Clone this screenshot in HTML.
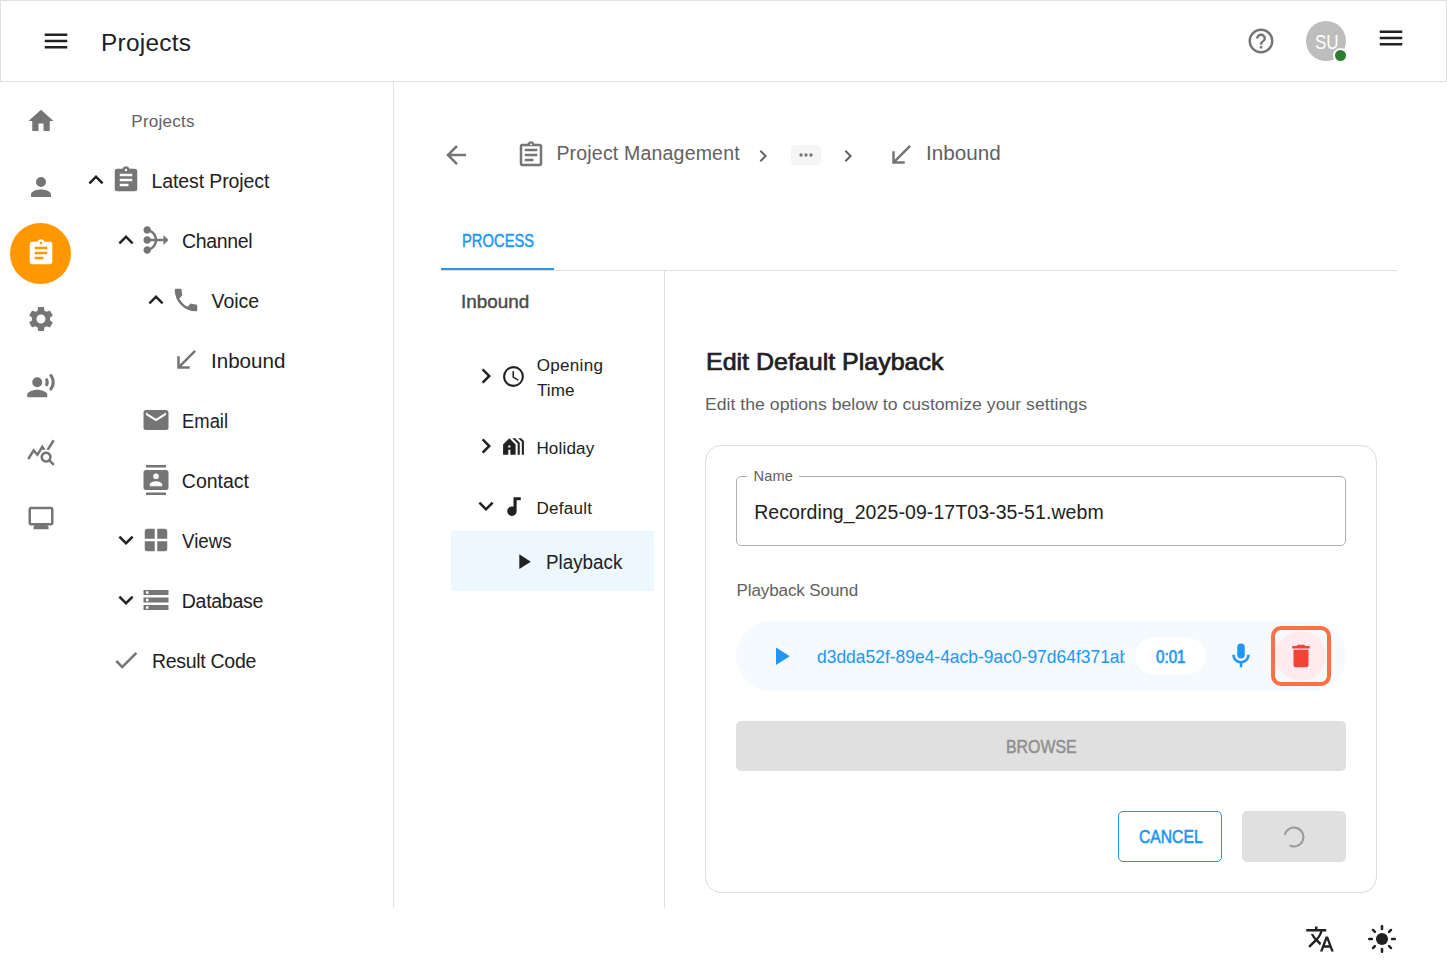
<!DOCTYPE html>
<html lang="en"><head><meta charset="utf-8"><title>Projects</title>
<style>
html,body{margin:0;padding:0;background:#fff;}
body{width:1447px;height:970px;position:relative;overflow:hidden;font-family:"Liberation Sans",sans-serif;}
.i{position:absolute;display:block;}
.t{position:absolute;line-height:1;white-space:nowrap;}
.b{position:absolute;box-sizing:border-box;}
</style></head><body>
<div class="b" style="left:0px;top:0px;width:1447px;height:82px;border:1px solid #e0e0e0;background:#fff;"></div>
<svg class="i" style="left:41px;top:26px;width:30px;height:30px;fill:#212121;" viewBox="0 0 24 24"><path d="M3,6H21V8H3V6M3,11H21V13H3V11M3,16H21V18H3V16Z"/></svg>
<div class="t" style="left:101.00px;top:31.00px;font-size:24.4px;color:#212121;letter-spacing:0.270px;">Projects</div>
<svg class="i" style="left:1246px;top:26px;width:30px;height:30px;fill:#757575;" viewBox="0 0 24 24"><path d="M11,18H13V16H11V18M12,2A10,10 0 0,0 2,12A10,10 0 0,0 12,22A10,10 0 0,0 22,12A10,10 0 0,0 12,2M12,20C7.59,20 4,16.41 4,12C4,7.59 7.59,4 12,4C16.41,4 20,7.59 20,12C20,16.41 16.41,20 12,20M12,6A4,4 0 0,0 8,10H10A2,2 0 0,1 12,8A2,2 0 0,1 14,10C14,12 11,11.75 11,15H13C13,12.75 16,12.5 16,10A4,4 0 0,0 12,6Z"/></svg>
<div class="b" style="left:1306px;top:21px;width:40px;height:40px;border-radius:50%;background:#bdbdbd;"></div>
<div class="t" style="left:1314.70px;top:33.00px;font-size:19.5px;color:#fff;transform:scaleX(0.8729);transform-origin:0 0;">SU</div>
<div class="b" style="left:1333px;top:47.7px;width:15px;height:15px;border-radius:50%;background:#2e7d32;border:2px solid #fff;"></div>
<svg class="i" style="left:1376px;top:23px;width:30px;height:30px;fill:#212121;" viewBox="0 0 24 24"><path d="M3,6H21V8H3V6M3,11H21V13H3V11M3,16H21V18H3V16Z"/></svg>
<svg class="i" style="left:26px;top:106px;width:30px;height:30px;fill:#757575;" viewBox="0 0 24 24"><path d="M10,20V14H14V20H19V12H22L12,3L2,12H5V20H10Z"/></svg>
<svg class="i" style="left:26px;top:172px;width:30px;height:30px;fill:#757575;" viewBox="0 0 24 24"><path d="M12,4A4,4 0 0,1 16,8A4,4 0 0,1 12,12A4,4 0 0,1 8,8A4,4 0 0,1 12,4M12,14C16.42,14 20,15.79 20,18V20H4V18C4,15.79 7.58,14 12,14Z"/></svg>
<div class="b" style="left:10px;top:223px;width:61px;height:61px;border-radius:50%;background:#ff9800;"></div>
<svg class="i" style="left:26px;top:238px;width:30px;height:30px;fill:#fff;" viewBox="0 0 24 24"><path d="M17,9H7V7H17M17,13H7V11H17M14,17H7V15H14M12,3A1,1 0 0,1 13,4A1,1 0 0,1 12,5A1,1 0 0,1 11,4A1,1 0 0,1 12,3M19,3H14.82C14.4,1.84 13.3,1 12,1C10.7,1 9.6,1.84 9.18,3H5A2,2 0 0,0 3,5V19A2,2 0 0,0 5,21H19A2,2 0 0,0 21,19V5A2,2 0 0,0 19,3Z"/></svg>
<svg class="i" style="left:26px;top:304px;width:30px;height:30px;fill:#757575;" viewBox="0 0 24 24"><path d="M19.14,12.94c0.04-0.3,0.06-0.61,0.06-0.94c0-0.32-0.02-0.64-0.07-0.94l2.03-1.58c0.18-0.14,0.23-0.41,0.12-0.61l-1.92-3.32c-0.12-0.22-0.37-0.29-0.59-0.22l-2.39,0.96c-0.5-0.38-1.03-0.7-1.62-0.94L14.4,2.81c-0.04-0.24-0.24-0.41-0.48-0.41h-3.84c-0.24,0-0.43,0.17-0.47,0.41L9.25,5.35C8.66,5.59,8.12,5.92,7.63,6.29L5.24,5.33c-0.22-0.08-0.47,0-0.59,0.22L2.74,8.87C2.62,9.08,2.66,9.34,2.86,9.48l2.03,1.58C4.84,11.36,4.8,11.69,4.8,12s0.02,0.64,0.07,0.94l-2.03,1.58c-0.18,0.14-0.23,0.41-0.12,0.61l1.92,3.32c0.12,0.22,0.37,0.29,0.59,0.22l2.39-0.96c0.5,0.38,1.03,0.7,1.62,0.94l0.36,2.54c0.05,0.24,0.24,0.41,0.48,0.41h3.84c0.24,0,0.44-0.17,0.47-0.41l0.36-2.54c0.59-0.24,1.13-0.56,1.62-0.94l2.39,0.96c0.22,0.08,0.47,0,0.59-0.22l1.92-3.32c0.12-0.22,0.07-0.47-0.12-0.61L19.14,12.94z M12,15.6c-1.98,0-3.6-1.62-3.6-3.6s1.62-3.6,3.6-3.6s3.6,1.62,3.6,3.6S13.98,15.6,12,15.6z"/></svg>
<svg class="i" style="left:26px;top:371px;width:30px;height:30px;fill:#757575;" viewBox="0 0 24 24"><path d="M9,5A4,4 0 0,1 13,9A4,4 0 0,1 9,13A4,4 0 0,1 5,9A4,4 0 0,1 9,5M9,15C11.67,15 17,16.34 17,19V21H1V19C1,16.34 6.33,15 9,15M16.76,5.36C18.78,7.56 18.78,10.61 16.76,12.63L15.08,10.94C15.92,9.76 15.92,8.23 15.08,7.05L16.76,5.36M20.07,2C24,6.05 23.97,12.11 20.07,16L18.44,14.37C21.21,11.19 21.21,6.65 18.44,3.63L20.07,2Z"/></svg>
<svg class="i" style="left:26px;top:437px;width:30px;height:30px;fill:#757575;" viewBox="0 0 24 24"><path d="M19.88,18.47c0.44-0.7,0.7-1.51,0.7-2.39c0-2.49-2.01-4.5-4.5-4.5s-4.5,2.01-4.5,4.5s2.01,4.5,4.49,4.5c0.88,0,1.7-0.26,2.39-0.7L21.58,23L23,21.58L19.88,18.47z M16.08,18.58c-1.38,0-2.5-1.12-2.5-2.5c0-1.38,1.12-2.5,2.5-2.5s2.5,1.12,2.5,2.5C18.58,17.46,17.46,18.58,16.08,18.58z M15.72,10.08c-0.74,0.02-1.45,0.18-2.1,0.45l-0.55-0.83l-3.8,6.18l-3.01-3.52l-3.63,5.81L1,17l5-8l3,3.5L13,6C13,6,15.72,10.08,15.72,10.08z M18.31,10.58c-0.64-0.28-1.33-0.45-2.05-0.49c0,0,5.12-8.09,5.12-8.09L23,3.18L18.31,10.58z"/></svg>
<svg class="i" style="left:26px;top:503px;width:30px;height:30px;fill:#757575;" viewBox="0 0 24 24"><path d="M20 3H4c-1.1 0-2 .9-2 2v11c0 1.1.9 2 2 2h3l-1 1v2h12v-2l-1-1h3c1.1 0 2-.9 2-2V5c0-1.1-.9-2-2-2zm0 13H4V5h16v11z"/></svg>
<div class="b" style="left:393px;top:82px;width:1px;height:826px;background:#e0e0e0;"></div>
<div class="t" style="left:131.30px;top:113.00px;font-size:17.06px;color:#616161;letter-spacing:0.221px;">Projects</div>
<svg class="i" style="left:81px;top:165px;width:30px;height:30px;fill:#212121;" viewBox="0 0 24 24"><path d="M7.41,15.41L12,10.83L16.59,15.41L18,14L12,8L6,14L7.41,15.41Z"/></svg>
<svg class="i" style="left:111px;top:165px;width:30px;height:30px;fill:#757575;" viewBox="0 0 24 24"><path d="M17,9H7V7H17M17,13H7V11H17M14,17H7V15H14M12,3A1,1 0 0,1 13,4A1,1 0 0,1 12,5A1,1 0 0,1 11,4A1,1 0 0,1 12,3M19,3H14.82C14.4,1.84 13.3,1 12,1C10.7,1 9.6,1.84 9.18,3H5A2,2 0 0,0 3,5V19A2,2 0 0,0 5,21H19A2,2 0 0,0 21,19V5A2,2 0 0,0 19,3Z"/></svg>
<div class="t" style="left:151.40px;top:172.00px;font-size:19.5px;color:#212121;letter-spacing:-0.093px;">Latest Project</div>
<svg class="i" style="left:111px;top:225px;width:30px;height:30px;fill:#212121;" viewBox="0 0 24 24"><path d="M7.41,15.41L12,10.83L16.59,15.41L18,14L12,8L6,14L7.41,15.41Z"/></svg>
<svg class="i" style="left:141px;top:225px;width:30px;height:30px;fill:#757575;" viewBox="0 0 24 24"><path d="M18,16l4-4l-4-4v3h-5.06c-0.34-3.1-2.26-5.72-4.94-7.05C7.96,2.31,6.64,1,5,1C3.34,1,2,2.34,2,4s1.34,3,3,3c0.95,0,1.78-0.45,2.33-1.14C9.23,6.9,10.6,8.77,10.92,11h-3.1C7.4,9.84,6.3,9,5,9c-1.66,0-3,1.34-3,3s1.34,3,3,3c1.3,0,2.4-0.84,2.82-2h3.1c-0.32,2.23-1.69,4.1-3.58,5.14C6.78,17.45,5.95,17,5,17c-1.66,0-3,1.34-3,3s1.34,3,3,3c1.64,0,2.96-1.31,2.99-2.95c2.68-1.33,4.6-3.95,4.94-7.05H18V16z"/></svg>
<div class="t" style="left:182.00px;top:232.00px;font-size:19.5px;color:#212121;letter-spacing:-0.335px;">Channel</div>
<svg class="i" style="left:141px;top:285px;width:30px;height:30px;fill:#212121;" viewBox="0 0 24 24"><path d="M7.41,15.41L12,10.83L16.59,15.41L18,14L12,8L6,14L7.41,15.41Z"/></svg>
<svg class="i" style="left:171px;top:285px;width:30px;height:30px;fill:#757575;" viewBox="0 0 24 24"><path d="M6.62,10.79C8.06,13.62 10.38,15.94 13.21,17.38L15.41,15.18C15.69,14.9 16.08,14.82 16.43,14.93C17.55,15.3 18.75,15.5 20,15.5A1,1 0 0,1 21,16.5V20A1,1 0 0,1 20,21A17,17 0 0,1 3,4A1,1 0 0,1 4,3H7.5A1,1 0 0,1 8.5,4C8.5,5.25 8.7,6.45 9.07,7.57C9.18,7.92 9.1,8.31 8.82,8.59L6.62,10.79Z"/></svg>
<div class="t" style="left:211.50px;top:292.00px;font-size:19.5px;color:#212121;letter-spacing:-0.039px;">Voice</div>
<svg class="i" style="left:171px;top:345px;width:30px;height:30px;fill:#757575;" viewBox="0 0 24 24"><path d="M15,19v-2H8.41L20,5.41L18.59,4L7,15.59V9H5v10H15z"/></svg>
<div class="t" style="left:211.45px;top:352.00px;font-size:19.5px;color:#212121;transform:scaleX(1.0547);transform-origin:0 0;">Inbound</div>
<svg class="i" style="left:141px;top:405px;width:30px;height:30px;fill:#757575;" viewBox="0 0 24 24"><path d="M20,8L12,13L4,8V6L12,11L20,6M20,4H4C2.89,4 2,4.89 2,6V18A2,2 0 0,0 4,20H20A2,2 0 0,0 22,18V6C22,4.89 21.1,4 20,4Z"/></svg>
<div class="t" style="left:181.56px;top:412.00px;font-size:19.5px;color:#212121;transform:scaleX(0.9446);transform-origin:0 0;">Email</div>
<svg class="i" style="left:141px;top:465px;width:30px;height:30px;fill:#757575;" viewBox="0 0 24 24"><path d="M20,0H4V2H20V0M4,24H20V22H4V24M20,4H4A2,2 0 0,0 2,6V18A2,2 0 0,0 4,20H20A2,2 0 0,0 22,18V6A2,2 0 0,0 20,4M12,6.75A2.25,2.25 0 0,1 14.25,9A2.25,2.25 0 0,1 12,11.25A2.25,2.25 0 0,1 9.75,9A2.25,2.25 0 0,1 12,6.75M17,17H7V15.5C7,13.83 10.33,13 12,13C13.67,13 17,13.83 17,15.5V17Z"/></svg>
<div class="t" style="left:181.80px;top:472.00px;font-size:19.5px;color:#212121;">Contact</div>
<svg class="i" style="left:111px;top:525px;width:30px;height:30px;fill:#212121;" viewBox="0 0 24 24"><path d="M7.41,8.58L12,13.17L16.59,8.58L18,10L12,16L6,10L7.41,8.58Z"/></svg>
<svg class="i" style="left:141px;top:525px;width:30px;height:30px;fill:#757575;" viewBox="0 0 24 24"><path d="M3,5A2,2 0 0,1 5,3H11V11H3ZM13,3H19A2,2 0 0,1 21,5V11H13ZM3,13H11V21H5A2,2 0 0,1 3,19ZM13,13H21V19A2,2 0 0,1 19,21H13Z"/></svg>
<div class="t" style="left:181.50px;top:532.00px;font-size:19.5px;color:#212121;transform:scaleX(0.9593);transform-origin:0 0;">Views</div>
<svg class="i" style="left:111px;top:585px;width:30px;height:30px;fill:#212121;" viewBox="0 0 24 24"><path d="M7.41,8.58L12,13.17L16.59,8.58L18,10L12,16L6,10L7.41,8.58Z"/></svg>
<svg class="i" style="left:141px;top:585px;width:30px;height:30px;fill:#757575;" viewBox="0 0 24 24"><path d="M2,20h20v-4H2V20z M4,17h2v2H4V17z M2,4v4h20V4H2z M6,7H4V5h2V7z M2,14h20v-4H2V14z M4,11h2v2H4V11z"/></svg>
<div class="t" style="left:181.80px;top:592.00px;font-size:19.5px;color:#212121;letter-spacing:-0.290px;">Database</div>
<svg class="i" style="left:111px;top:645px;width:30px;height:30px;fill:#757575;" viewBox="0 0 24 24"><path d="M21,7L9,19L3.5,13.5L4.91,12.09L9,16.17L19.59,5.59L21,7Z"/></svg>
<div class="t" style="left:151.90px;top:652.00px;font-size:19.5px;color:#212121;letter-spacing:-0.286px;">Result Code</div>
<svg class="i" style="left:441px;top:140px;width:30px;height:30px;fill:#757575;" viewBox="0 0 24 24"><path d="M20,11V13H8L13.5,18.5L12.08,19.92L4.16,12L12.08,4.08L13.5,5.5L8,11H20Z"/></svg>
<svg class="i" style="left:516px;top:140px;width:30px;height:30px;fill:#757575;" viewBox="0 0 24 24"><path d="M7 15h7v2H7zm0-4h10v2H7zm0-4h10v2H7zm12-4h-4.18C14.4 1.84 13.3 1 12 1c-1.3 0-2.4.84-2.82 2H5c-.14 0-.27.01-.4.04-.39.08-.74.28-1.01.55-.18.18-.33.4-.43.64-.1.23-.16.49-.16.77v14c0 .27.06.54.16.78s.25.45.43.64c.27.27.62.47 1.01.55.13.02.26.03.4.03h14c1.1 0 2-.9 2-2V5c0-1.1-.9-2-2-2zm-7-.25c.41 0 .75.34.75.75s-.34.75-.75.75-.75-.34-.75-.75.34-.75.75-.75zM19 19H5V5h14v14z"/></svg>
<div class="t" style="left:556.40px;top:144.00px;font-size:19.5px;color:#616161;letter-spacing:0.194px;">Project Management</div>
<svg class="i" style="left:751px;top:143.5px;width:24px;height:24px;fill:#616161;" viewBox="0 0 24 24"><path d="M8.59,16.58L13.17,12L8.59,7.41L10,6L16,12L10,18L8.59,16.58Z"/></svg>
<div class="b" style="left:791px;top:145px;width:30px;height:20px;background:#f5f5f5;border-radius:4px;"></div>
<svg class="i" style="left:796px;top:145px;width:20px;height:20px;fill:#757575;" viewBox="0 0 24 24"><path d="M16,12A2,2 0 0,1 18,10A2,2 0 0,1 20,12A2,2 0 0,1 18,14A2,2 0 0,1 16,12M10,12A2,2 0 0,1 12,10A2,2 0 0,1 14,12A2,2 0 0,1 12,14A2,2 0 0,1 10,12M4,12A2,2 0 0,1 6,10A2,2 0 0,1 8,12A2,2 0 0,1 6,14A2,2 0 0,1 4,12Z"/></svg>
<svg class="i" style="left:836px;top:143.5px;width:24px;height:24px;fill:#616161;" viewBox="0 0 24 24"><path d="M8.59,16.58L13.17,12L8.59,7.41L10,6L16,12L10,18L8.59,16.58Z"/></svg>
<svg class="i" style="left:885.75px;top:140.2px;width:30px;height:30px;fill:#757575;" viewBox="0 0 24 24"><path d="M15,19v-2H8.41L20,5.41L18.59,4L7,15.59V9H5v10H15z"/></svg>
<div class="t" style="left:925.54px;top:144.00px;font-size:19.5px;color:#616161;transform:scaleX(1.0591);transform-origin:0 0;">Inbound</div>
<div class="b" style="left:441px;top:270px;width:956px;height:1px;background:#e0e0e0;"></div>
<div class="b" style="left:441px;top:267.6px;width:112.8px;height:2.5px;background:#2196f3;"></div>
<div class="t" style="left:461.89px;top:232.00px;font-size:18.2px;color:#2196f3;transform:scaleX(0.8120);transform-origin:0 0;-webkit-text-stroke:0.5px #2196f3;">PROCESS</div>
<div class="b" style="left:664px;top:271px;width:1px;height:637px;background:#e0e0e0;"></div>
<div class="t" style="left:461.26px;top:293.00px;font-size:18.2px;color:#4a4a4a;transform:scaleX(1.0373);transform-origin:0 0;-webkit-text-stroke:0.4px #4a4a4a;">Inbound</div>
<svg class="i" style="left:471px;top:361px;width:30px;height:30px;fill:#212121;" viewBox="0 0 24 24"><path d="M8.59,16.58L13.17,12L8.59,7.41L10,6L16,12L10,18L8.59,16.58Z"/></svg>
<svg class="i" style="left:501.1px;top:364px;width:25px;height:25px;fill:#212121;" viewBox="0 0 24 24"><path d="M12,20A8,8 0 0,0 20,12A8,8 0 0,0 12,4A8,8 0 0,0 4,12A8,8 0 0,0 12,20M12,2A10,10 0 0,1 22,12A10,10 0 0,1 12,22C6.47,22 2,17.5 2,12A10,10 0 0,1 12,2M12.5,7V12.25L17,14.92L16.25,16.15L11,13V7H12.5Z"/></svg>
<div class="t" style="left:536.70px;top:357.00px;font-size:17.06px;color:#212121;letter-spacing:0.305px;">Opening</div>
<div class="t" style="left:537.00px;top:382.00px;font-size:17.06px;color:#212121;letter-spacing:0.044px;">Time</div>
<svg class="i" style="left:471px;top:431px;width:30px;height:30px;fill:#212121;" viewBox="0 0 24 24"><path d="M8.59,16.58L13.17,12L8.59,7.41L10,6L16,12L10,18L8.59,16.58Z"/></svg>
<svg class="i" style="left:501px;top:433.9px;width:25px;height:25px;fill:#212121;" viewBox="0 0 24 24"><path d="M18,20V8.35L13.65,4h-2.83L16,9.18V20H18z M22,20V6.69L19.31,4h-2.83L20,7.52V20H22z M8,4l-6,6v10h5v-5h2v5h5V10L8,4z M9,13H7v-2h2V13z"/></svg>
<div class="t" style="left:536.40px;top:440.00px;font-size:17.06px;color:#212121;letter-spacing:0.162px;">Holiday</div>
<svg class="i" style="left:471px;top:491px;width:30px;height:30px;fill:#212121;" viewBox="0 0 24 24"><path d="M7.41,8.58L12,13.17L16.59,8.58L18,10L12,16L6,10L7.41,8.58Z"/></svg>
<svg class="i" style="left:500.7px;top:494px;width:25px;height:25px;fill:#212121;" viewBox="0 0 24 24"><path d="M12,3V12.26C11.5,12.09 11,12 10.5,12C8,12 6,14 6,16.5C6,19 8,21 10.5,21C13,21 15,19 15,16.5V6H19V3H12Z"/></svg>
<div class="t" style="left:536.40px;top:500.00px;font-size:17.06px;color:#212121;letter-spacing:0.254px;">Default</div>
<div class="b" style="left:451px;top:531px;width:203px;height:60px;background:#edf7fe;"></div>
<svg class="i" style="left:510.9px;top:549px;width:25px;height:25px;fill:#212121;" viewBox="0 0 24 24"><path d="M8,5.14V19.14L19,12.14L8,5.14Z"/></svg>
<div class="t" style="left:546.34px;top:553.00px;font-size:19.5px;color:#212121;transform:scaleX(0.9646);transform-origin:0 0;">Playback</div>
<div class="t" style="left:706.48px;top:351.00px;font-size:23.4px;color:#212121;transform:scaleX(1.0680);transform-origin:0 0;-webkit-text-stroke:0.7px #212121;">Edit Default Playback</div>
<div class="t" style="left:705.46px;top:396.00px;font-size:17.06px;color:#616161;transform:scaleX(1.0363);transform-origin:0 0;">Edit the options below to customize your settings</div>
<div class="b" style="left:705px;top:445px;width:672px;height:447.5px;border:1px solid #dddddd;border-radius:16px;"></div>
<div class="b" style="left:736px;top:476px;width:610px;height:70px;border:1px solid #b0b0b0;border-radius:5px;"></div>
<div class="b" style="left:746.8px;top:475px;width:52.2px;height:3px;background:#fff;"></div>
<div class="t" style="left:753.50px;top:469.00px;font-size:14.6px;color:#616161;letter-spacing:0.163px;">Name</div>
<div class="t" style="left:754.20px;top:503.00px;font-size:19.5px;color:#212121;letter-spacing:0.078px;">Recording_2025-09-17T03-35-51.webm</div>
<div class="t" style="left:736.50px;top:582.00px;font-size:17.06px;color:#616161;letter-spacing:-0.117px;">Playback Sound</div>
<div class="b" style="left:736px;top:621px;width:610px;height:70px;background:#f4fafe;border-radius:35px;"></div>
<svg class="i" style="left:766px;top:640.8px;width:30px;height:30px;fill:#2196f3;" viewBox="0 0 24 24"><path d="M8,5.14V19.14L19,12.14L8,5.14Z"/></svg>
<div class="t" style="left:816.80px;top:648.00px;font-size:18.2px;color:#2196f3;width:321.088px;overflow:hidden;transform:scaleX(0.9589);transform-origin:0 0;">d3dda52f-89e4-4acb-9ac0-97d64f371ab2.webm</div>
<div class="b" style="left:1135px;top:638px;width:71px;height:36px;background:#fff;border-radius:18px;"></div>
<div class="t" style="left:1156.20px;top:648.00px;font-size:18.2px;color:#2196f3;transform:scaleX(0.8333);transform-origin:0 0;-webkit-text-stroke:0.7px #2196f3;">0:01</div>
<svg class="i" style="left:1225.9px;top:640.7px;width:30px;height:30px;fill:#2196f3;" viewBox="0 0 24 24"><path d="M12,2A3,3 0 0,1 15,5V11A3,3 0 0,1 12,14A3,3 0 0,1 9,11V5A3,3 0 0,1 12,2M19,11C19,14.53 16.39,17.44 13,17.93V21H11V17.93C7.61,17.44 5,14.53 5,11H7A5,5 0 0,0 12,16A5,5 0 0,0 17,11H19Z"/></svg>
<div class="b" style="left:1276.2px;top:630.8px;width:50px;height:50px;border-radius:50%;background:#ffebee;"></div>
<div class="b" style="left:1271px;top:626px;width:60px;height:60px;border:4px solid #ff7043;border-radius:10px;"></div>
<svg class="i" style="left:1286px;top:641px;width:30px;height:30px;fill:#f44336;" viewBox="0 0 24 24"><path d="M19,4H15.5L14.5,3H9.5L8.5,4H5V6H19M6,19A2,2 0 0,0 8,21H16A2,2 0 0,0 18,19V7H6V19Z"/></svg>
<div class="b" style="left:736px;top:721px;width:610px;height:50px;background:#e0e0e0;border-radius:5px;"></div>
<div class="t" style="left:1005.53px;top:738.00px;font-size:18.2px;color:#8f8f8f;transform:scaleX(0.8744);transform-origin:0 0;-webkit-text-stroke:0.5px #8f8f8f;">BROWSE</div>
<div class="b" style="left:1118px;top:811px;width:104px;height:50.6px;border:1px solid #2196f3;border-radius:5px;"></div>
<div class="t" style="left:1138.70px;top:828.00px;font-size:18.2px;color:#2196f3;transform:scaleX(0.8620);transform-origin:0 0;-webkit-text-stroke:0.6px #2196f3;">CANCEL</div>
<div class="b" style="left:1242px;top:811px;width:104px;height:50.6px;background:#e0e0e0;border-radius:5px;"></div>
<svg class="i" style="left:1281px;top:824.1px;width:26px;height:26px;" viewBox="0 0 26 26"><path d="M3.79 10.87 A9.45 9.45 0 1 1 8.71 21.42" fill="none" stroke="#999" stroke-width="2"/></svg>
<svg class="i" style="left:1305px;top:924px;width:30px;height:30px;fill:#212121;" viewBox="0 0 24 24"><path d="M12.87,15.07L10.33,12.56L10.36,12.53C12.1,10.59 13.34,8.36 14.07,6H17V4H10V2H8V4H1V6H12.17C11.5,7.92 10.44,9.75 9,11.35C8.07,10.32 7.3,9.19 6.69,8H4.69C5.42,9.63 6.42,11.17 7.67,12.56L2.58,17.58L4,19L9,14L12.11,17.11L12.87,15.07M18.5,10H16.5L12,22H14L15.12,19H19.87L21,22H23L18.5,10M15.88,17L17.5,12.67L19.12,17H15.88Z"/></svg>
<svg class="i" style="left:1367px;top:924px;width:30px;height:30px;" viewBox="0 0 30 30"><circle cx="15" cy="15" r="6.05" fill="#212121"/><g stroke="#212121" stroke-width="2.5" stroke-linecap="round"><line x1="25.05" y1="15.00" x2="27.75" y2="15.00"/><line x1="22.11" y1="22.11" x2="24.02" y2="24.02"/><line x1="15.00" y1="25.05" x2="15.00" y2="27.75"/><line x1="7.89" y1="22.11" x2="5.98" y2="24.02"/><line x1="4.95" y1="15.00" x2="2.25" y2="15.00"/><line x1="7.89" y1="7.89" x2="5.98" y2="5.98"/><line x1="15.00" y1="4.95" x2="15.00" y2="2.25"/><line x1="22.11" y1="7.89" x2="24.02" y2="5.98"/></g></svg>
</body></html>
